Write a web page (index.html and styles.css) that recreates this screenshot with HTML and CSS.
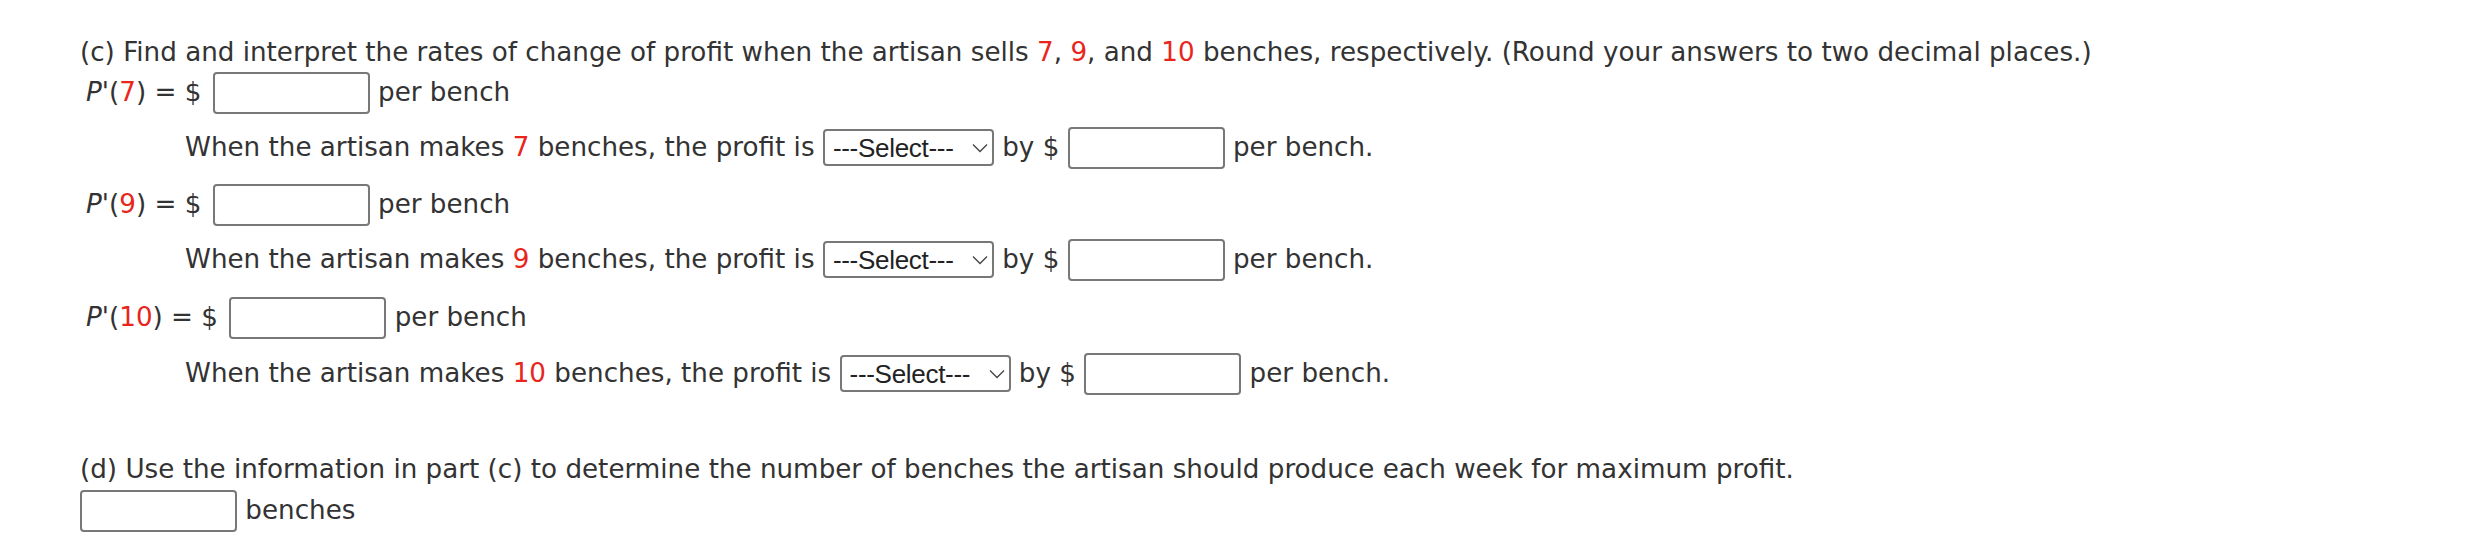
FILE: index.html
```html
<!DOCTYPE html>
<html>
<head>
<meta charset="utf-8">
<link rel="stylesheet" href="styles.css">
</head>
<body>
<div class="qa">
  <div class="title">(c) Find and interpret the rates of change of profit when the artisan sells <span class="red">7</span>, <span class="red">9</span>, and <span class="red">10</span> benches, respectively. (Round your answers to two decimal places.)</div>

  <div class="row r1"><span class="fn"><i>P'</i>(<span class="red">7</span>) = $</span> <input class="ans" type="text"> per bench</div>
  <div class="row sub r2">When the artisan makes <span class="red">7</span> benches, the profit is <span class="sel"><span class="seltext">---Select---</span><svg class="chev" viewBox="0 0 16 10" width="16" height="10"><path d="M1 1.5 L8 8.5 L15 1.5" fill="none" stroke="#444" stroke-width="1.3"/></svg></span> by $ <input class="ans" type="text"> per bench.</div>

  <div class="row r3"><span class="fn"><i>P'</i>(<span class="red">9</span>) = $</span> <input class="ans" type="text"> per bench</div>
  <div class="row sub r4">When the artisan makes <span class="red">9</span> benches, the profit is <span class="sel"><span class="seltext">---Select---</span><svg class="chev" viewBox="0 0 16 10" width="16" height="10"><path d="M1 1.5 L8 8.5 L15 1.5" fill="none" stroke="#444" stroke-width="1.3"/></svg></span> by $ <input class="ans" type="text"> per bench.</div>

  <div class="row r5"><span class="fn"><i>P'</i>(<span class="red">10</span>) = $</span> <input class="ans" type="text"> per bench</div>
  <div class="row sub r6">When the artisan makes <span class="red">10</span> benches, the profit is <span class="sel"><span class="seltext">---Select---</span><svg class="chev" viewBox="0 0 16 10" width="16" height="10"><path d="M1 1.5 L8 8.5 L15 1.5" fill="none" stroke="#444" stroke-width="1.3"/></svg></span> by $ <input class="ans" type="text"> per bench.</div>

  <div class="title d">(d) Use the information in part (c) to determine the number of benches the artisan should produce each week for maximum profit.</div>
  <div class="row r8"><input class="ans" type="text"> benches</div>
</div>
</body>
</html>
```

FILE: styles.css
```css
html, body {
  margin: 0;
  padding: 0;
  background: #ffffff;
}
.qa {
  padding: 32px 0 0 80px;
  font-family: "DejaVu Sans", Verdana, sans-serif;
  font-size: 26.2px;
  color: #333333;
}
.title {
  height: 40px;
  line-height: 40px;
  white-space: nowrap;
}
.red {
  color: #e8261c;
}
.row {
  height: 42px;
  line-height: 40px;
  white-space: nowrap;
}
.fn {
  padding-left: 6px;
  padding-right: 3px;
}
.sub {
  padding-left: 105px;
}
.r2 { margin-top: 13px; }
.r3 { margin-top: 15px; }
.r4 { margin-top: 13px; }
.r5 { margin-top: 16px; }
.r6 { margin-top: 14px; }
.d { margin-top: 54px; }
.r8 { margin-top: 1px; }
.ans {
  box-sizing: border-box;
  width: 157px;
  height: 42px;
  border: 2px solid #787878;
  border-radius: 4px;
  padding: 0;
  margin: 0;
  vertical-align: top;
  background: #fff;
  font: inherit;
}
.sel {
  box-sizing: border-box;
  display: inline-flex;
  align-items: center;
  justify-content: space-between;
  width: 171px;
  height: 37px;
  margin-top: 2px;
  border: 2px solid #787878;
  border-radius: 4px;
  padding: 0 4px 0 8px;
  vertical-align: top;
  font-family: "Liberation Sans", Arial, sans-serif;
  font-size: 26px;
  line-height: 1;
  color: #222;
  background: #fff;
}
.seltext {
  letter-spacing: -0.3px;
}
.chev {
  display: block;
}
```
